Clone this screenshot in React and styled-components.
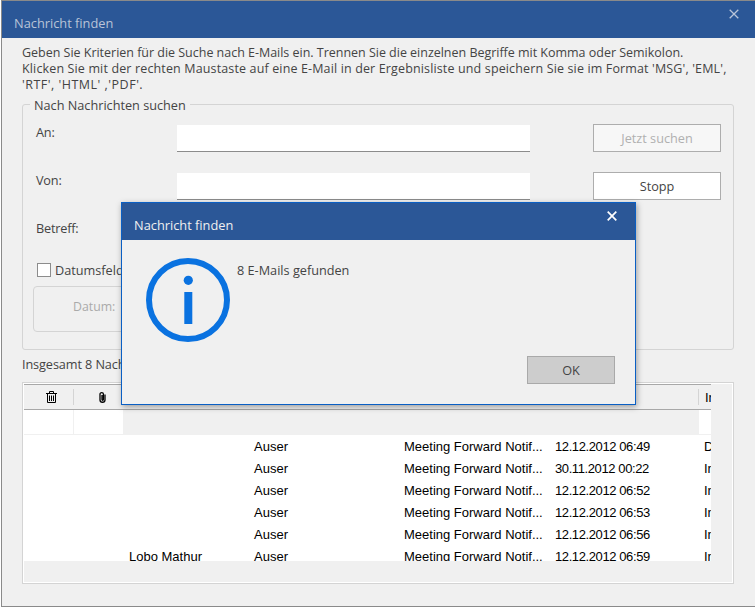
import React from "react";
import styled, { createGlobalStyle } from "styled-components";

const rows = [
  { from: "", to: "Auser", subject: "Meeting Forward Notif...", date: "12.12.2012 06:49", folder: "D" },
  { from: "", to: "Auser", subject: "Meeting Forward Notif...", date: "30.11.2012 00:22", folder: "In" },
  { from: "", to: "Auser", subject: "Meeting Forward Notif...", date: "12.12.2012 06:52", folder: "In" },
  { from: "", to: "Auser", subject: "Meeting Forward Notif...", date: "12.12.2012 06:53", folder: "In" },
  { from: "", to: "Auser", subject: "Meeting Forward Notif...", date: "12.12.2012 06:56", folder: "In" },
  { from: "Lobo Mathur", to: "Auser", subject: "Meeting Forward Notif...", date: "12.12.2012 06:59", folder: "In" },
];

const CloseIcon = ({ color, weight = 1.3 }) => (
  <svg width="10" height="10" viewBox="0 0 10 10">
    <path d="M0.7 0.7L9.3 9.3M9.3 0.7L0.7 9.3" stroke={color} strokeWidth={weight} fill="none" />
  </svg>
);

const TrashIcon = () => (
  <svg width="11" height="12" viewBox="0 0 11 12">
    <path
      d="M0 2.5H11M3.5 2.5V0.5H7.5V2.5M1.5 2.5V11.5H9.5V2.5M3.5 4.5V10M5.5 4.5V10M7.5 4.5V10"
      stroke="#000"
      strokeWidth="1"
      fill="none"
    />
  </svg>
);

const ClipIcon = () => (
  <svg width="7" height="11" viewBox="0 0 7 11">
    <path
      d="M3 3V7.5C3 8.6 4.4 8.6 4.4 7.5V2C4.4 0.2 1 0.2 1 2V8C1 11 6 11 6 8V2.5"
      stroke="#000"
      strokeWidth="1.3"
      fill="none"
    />
  </svg>
);

const InfoIcon = () => (
  <svg width="84" height="84" viewBox="0 0 84 84">
    <circle cx="42" cy="42" r="39" stroke="#0a72e0" strokeWidth="6" fill="none" />
    <circle cx="42.3" cy="22.3" r="4.6" fill="#0a72e0" />
    <rect x="38.3" y="34" width="8" height="32" fill="#0a72e0" />
  </svg>
);

const App = () => (
  <>
    <GlobalStyle />
    <Window>
      <TitleBar>
        <DimTitle>Nachricht finden</DimTitle>
        <CloseIcon color="#b9c4d8" />
      </TitleBar>
      <Body>
        <Intro>
          <IntroLine $spacing="-0.02px">
            Geben Sie Kriterien für die Suche nach E-Mails ein. Trennen Sie die einzelnen Begriffe mit Komma oder Semikolon.
          </IntroLine>
          <IntroLine $spacing="0.14px">
            Klicken Sie mit der rechten Maustaste auf eine E-Mail in der Ergebnisliste und speichern Sie sie im Format 'MSG', 'EML',
          </IntroLine>
          <IntroLine $spacing="0.5px">'RTF', 'HTML' ,'PDF'.</IntroLine>
        </Intro>
        <SearchGroup>
          <Legend>Nach Nachrichten suchen</Legend>
          <FormRow>
            <FieldLabel>An:</FieldLabel>
            <TextField />
            <ActionButton disabled>Jetzt suchen</ActionButton>
          </FormRow>
          <FormRow>
            <FieldLabel>Von:</FieldLabel>
            <TextField />
            <ActionButton>Stopp</ActionButton>
          </FormRow>
          <FormRow>
            <FieldLabel>Betreff:</FieldLabel>
          </FormRow>
          <CheckRow>
            <CheckBox />
            <span>Datumsfeld</span>
          </CheckRow>
          <DateGroup>
            <DateLabel>Datum:</DateLabel>
          </DateGroup>
        </SearchGroup>
        <Summary>Insgesamt 8 Nachrichten gefunden</Summary>
        <ResultTable>
          <TablePanel>
            <HeaderRow>
              <IconCell>
                <TrashIcon />
              </IconCell>
              <IconCell>
                <ClipIcon />
              </IconCell>
              <HeaderFill />
              <HeaderLast>In</HeaderLast>
            </HeaderRow>
            <FilterRow>
              <FilterCell />
              <FilterCell />
              <FilterFill />
              <FilterLast />
            </FilterRow>
            <RowList>
              {rows.map((row) => (
                <Row key={row.date}>
                  <From>{row.from}</From>
                  <To>{row.to}</To>
                  <Subject>{row.subject}</Subject>
                  <DateText>{row.date}</DateText>
                  <Folder>{row.folder}</Folder>
                </Row>
              ))}
            </RowList>
          </TablePanel>
        </ResultTable>
      </Body>
    </Window>

    <Dialog>
      <DialogTitle>
        <span>Nachricht finden</span>
        <CloseIcon color="#fff" weight={1.7} />
      </DialogTitle>
      <DialogBody>
        <InfoIcon />
        <DialogText>8 E-Mails gefunden</DialogText>
      </DialogBody>
      <DialogFooter>
        <OkButton>OK</OkButton>
      </DialogFooter>
    </Dialog>
  </>
);

const GlobalStyle = createGlobalStyle`
  html, body {
    margin: 0;
    height: 100%;
    overflow: hidden;
    background: #fff;
  }

  body {
    font-family: "Open Sans", "Liberation Sans", sans-serif;
    font-size: 12.7px;
    color: #444;
  }
`;

const Window = styled.div`
  box-sizing: border-box;
  width: 754px;
  height: 607px;
  display: flex;
  flex-direction: column;
  margin-left: 1px;
  background: #f0f0f0;
  border-top: 1px solid #8a8a8a;
  border-left: 1px solid #8a8a8a;
  border-bottom: 1px solid #8a8a8a;
`;

const TitleBar = styled.div`
  height: 37px;
  flex: none;
  display: flex;
  align-items: center;
  justify-content: space-between;
  padding: 0 16px 12px 12px;
  box-sizing: border-box;
  background: #2b5797;
  color: #b9c4d8;
  font-size: 12.8px;
`;

const DimTitle = styled.span`
  position: relative;
  top: 9px;
`;

const Body = styled.div`
  flex: 1;
  padding: 7px 20px 0 20px;
`;

const Intro = styled.div`
  font-size: 12.5px;
  line-height: 16px;
  white-space: nowrap;
`;

const IntroLine = styled.div`
  letter-spacing: ${(props) => props.$spacing};
`;

const SearchGroup = styled.div`
  position: relative;
  box-sizing: border-box;
  width: 712px;
  height: 246px;
  margin-top: 11px;
  padding: 19px 11px 0 13px;
  border: 1px solid #d4d4d4;
  border-radius: 3px;
`;

const Legend = styled.span`
  position: absolute;
  top: -8px;
  left: 7px;
  padding: 0 4px;
  background: #f0f0f0;
  line-height: 16px;
`;

const FormRow = styled.div`
  height: 28px;
  margin-bottom: 20px;
  display: flex;
  align-items: flex-start;
`;

const FieldLabel = styled.label`
  width: 141px;
  flex: none;
  line-height: 16px;
  letter-spacing: -0.2px;
`;

const TextField = styled.div`
  box-sizing: border-box;
  width: 353px;
  height: 27px;
  margin-top: 1px;
  background: #fff;
  border-bottom: 1px solid #8c8c8c;
`;

const ActionButton = styled.button`
  box-sizing: border-box;
  width: 128px;
  height: 28px;
  margin-left: 63px;
  padding: 0;
  background: #fff;
  border: 1px solid #adadad;
  border-radius: 0;
  font: inherit;
  color: #444;

  &:disabled {
    background: #f7f7f7;
    color: #b0b0b0;
  }
`;

const CheckRow = styled.div`
  display: flex;
  align-items: center;
  gap: 4px;
  height: 16px;
  margin: -6px 0 0 1px;
`;

const CheckBox = styled.span`
  box-sizing: border-box;
  width: 14px;
  height: 14px;
  background: #fff;
  border: 1px solid #8c8c8c;
`;

const DateGroup = styled.div`
  box-sizing: border-box;
  width: 420px;
  height: 46px;
  margin: 8px 0 0 -3px;
  padding: 0 0 6px 39px;
  display: flex;
  align-items: center;
  border: 1px solid #d4d4d4;
  border-radius: 4px;
`;

const DateLabel = styled.span`
  color: #aaa;
  font-size: 12.3px;
`;

const Summary = styled.div`
  margin-top: 6px;
  line-height: 16px;
  letter-spacing: -0.1px;
  white-space: nowrap;
`;

const ResultTable = styled.div`
  box-sizing: border-box;
  width: 712px;
  height: 202px;
  margin-top: 10px;
  padding: 1px;
  background: #fff;
  border: 1px solid #d4d4d4;
  color: #000;
  font-family: "Liberation Sans", Arial, sans-serif;
  font-size: 13px;
`;

const TablePanel = styled.div`
  height: 100%;
  background: #f0f0f0;
`;

const HeaderRow = styled.div`
  box-sizing: border-box;
  width: 687px;
  height: 26px;
  display: flex;
  align-items: center;
  border-top: 1px solid #a8a8a8;
  border-bottom: 1px solid #a8a8a8;
`;

const IconCell = styled.div`
  box-sizing: border-box;
  width: 50px;
  height: 16px;
  padding-left: 6px;
  display: flex;
  align-items: center;
  justify-content: center;
  border-right: 1px solid #d4d4d4;

  & + & {
    border-right: none;
  }
`;

const HeaderFill = styled.div`
  flex: 1;
  height: 16px;
  border-right: 1px solid #d4d4d4;
`;

const HeaderLast = styled.div`
  box-sizing: border-box;
  width: 12px;
  padding-left: 6px;
  overflow: hidden;
`;

const FilterRow = styled.div`
  box-sizing: border-box;
  width: 687px;
  height: 25px;
  display: flex;
  background: #fff;
  border-bottom: 1px solid #f0f0f0;
`;

const FilterCell = styled.div`
  box-sizing: border-box;
  width: 50px;
  border-right: 1px solid #f0f0f0;

  & + & {
    width: 49px;
    border-right: none;
  }
`;

const FilterFill = styled.div`
  flex: 1;
  background: #f0f0f0;
`;

const FilterLast = styled.div`
  width: 12px;
`;

const RowList = styled.div`
  width: 687px;
  height: 126px;
  overflow: hidden;
  background: #fff;
`;

const Row = styled.div`
  height: 22px;
  display: flex;
  align-items: center;
  white-space: nowrap;
`;

const From = styled.span`
  width: 125px;
  margin-left: 105px;
  flex: none;
`;

const To = styled.span`
  width: 150px;
  flex: none;
`;

const Subject = styled.span`
  width: 151px;
  flex: none;
`;

const DateText = styled.span`
  width: 149px;
  flex: none;
  letter-spacing: -0.4px;
`;

const Folder = styled.span`
  width: 7px;
  overflow: hidden;
  flex: none;
`;

const Dialog = styled.div`
  position: absolute;
  top: 202px;
  left: 121px;
  box-sizing: border-box;
  width: 515px;
  height: 203px;
  display: flex;
  flex-direction: column;
  background: #f0f0f0;
  border: 1px solid #0a5fc4;
  box-shadow: 1px 2px 6px rgba(0, 0, 0, 0.35);
`;

const DialogTitle = styled.div`
  height: 37px;
  flex: none;
  box-sizing: border-box;
  display: flex;
  align-items: center;
  justify-content: space-between;
  padding: 6px 18px 0 12px;
  background: #2b5797;
  color: #f0f0f0;
  font-size: 12.8px;

  svg {
    position: relative;
    top: -9px;
  }
`;

const DialogBody = styled.div`
  flex: 1;
  display: flex;
  align-items: flex-start;
  padding: 18px 0 0 24px;
`;

const DialogText = styled.span`
  margin: 4px 0 0 7px;
  line-height: 16px;
`;

const DialogFooter = styled.div`
  display: flex;
  justify-content: flex-end;
  padding: 0 20px 20px 0;
`;

const OkButton = styled.button`
  box-sizing: border-box;
  width: 88px;
  height: 28px;
  padding: 0;
  background: #cdcdcd;
  border: 1px solid #a9a9a9;
  border-radius: 0;
  font: inherit;
  color: #444;
`;

export default App;
